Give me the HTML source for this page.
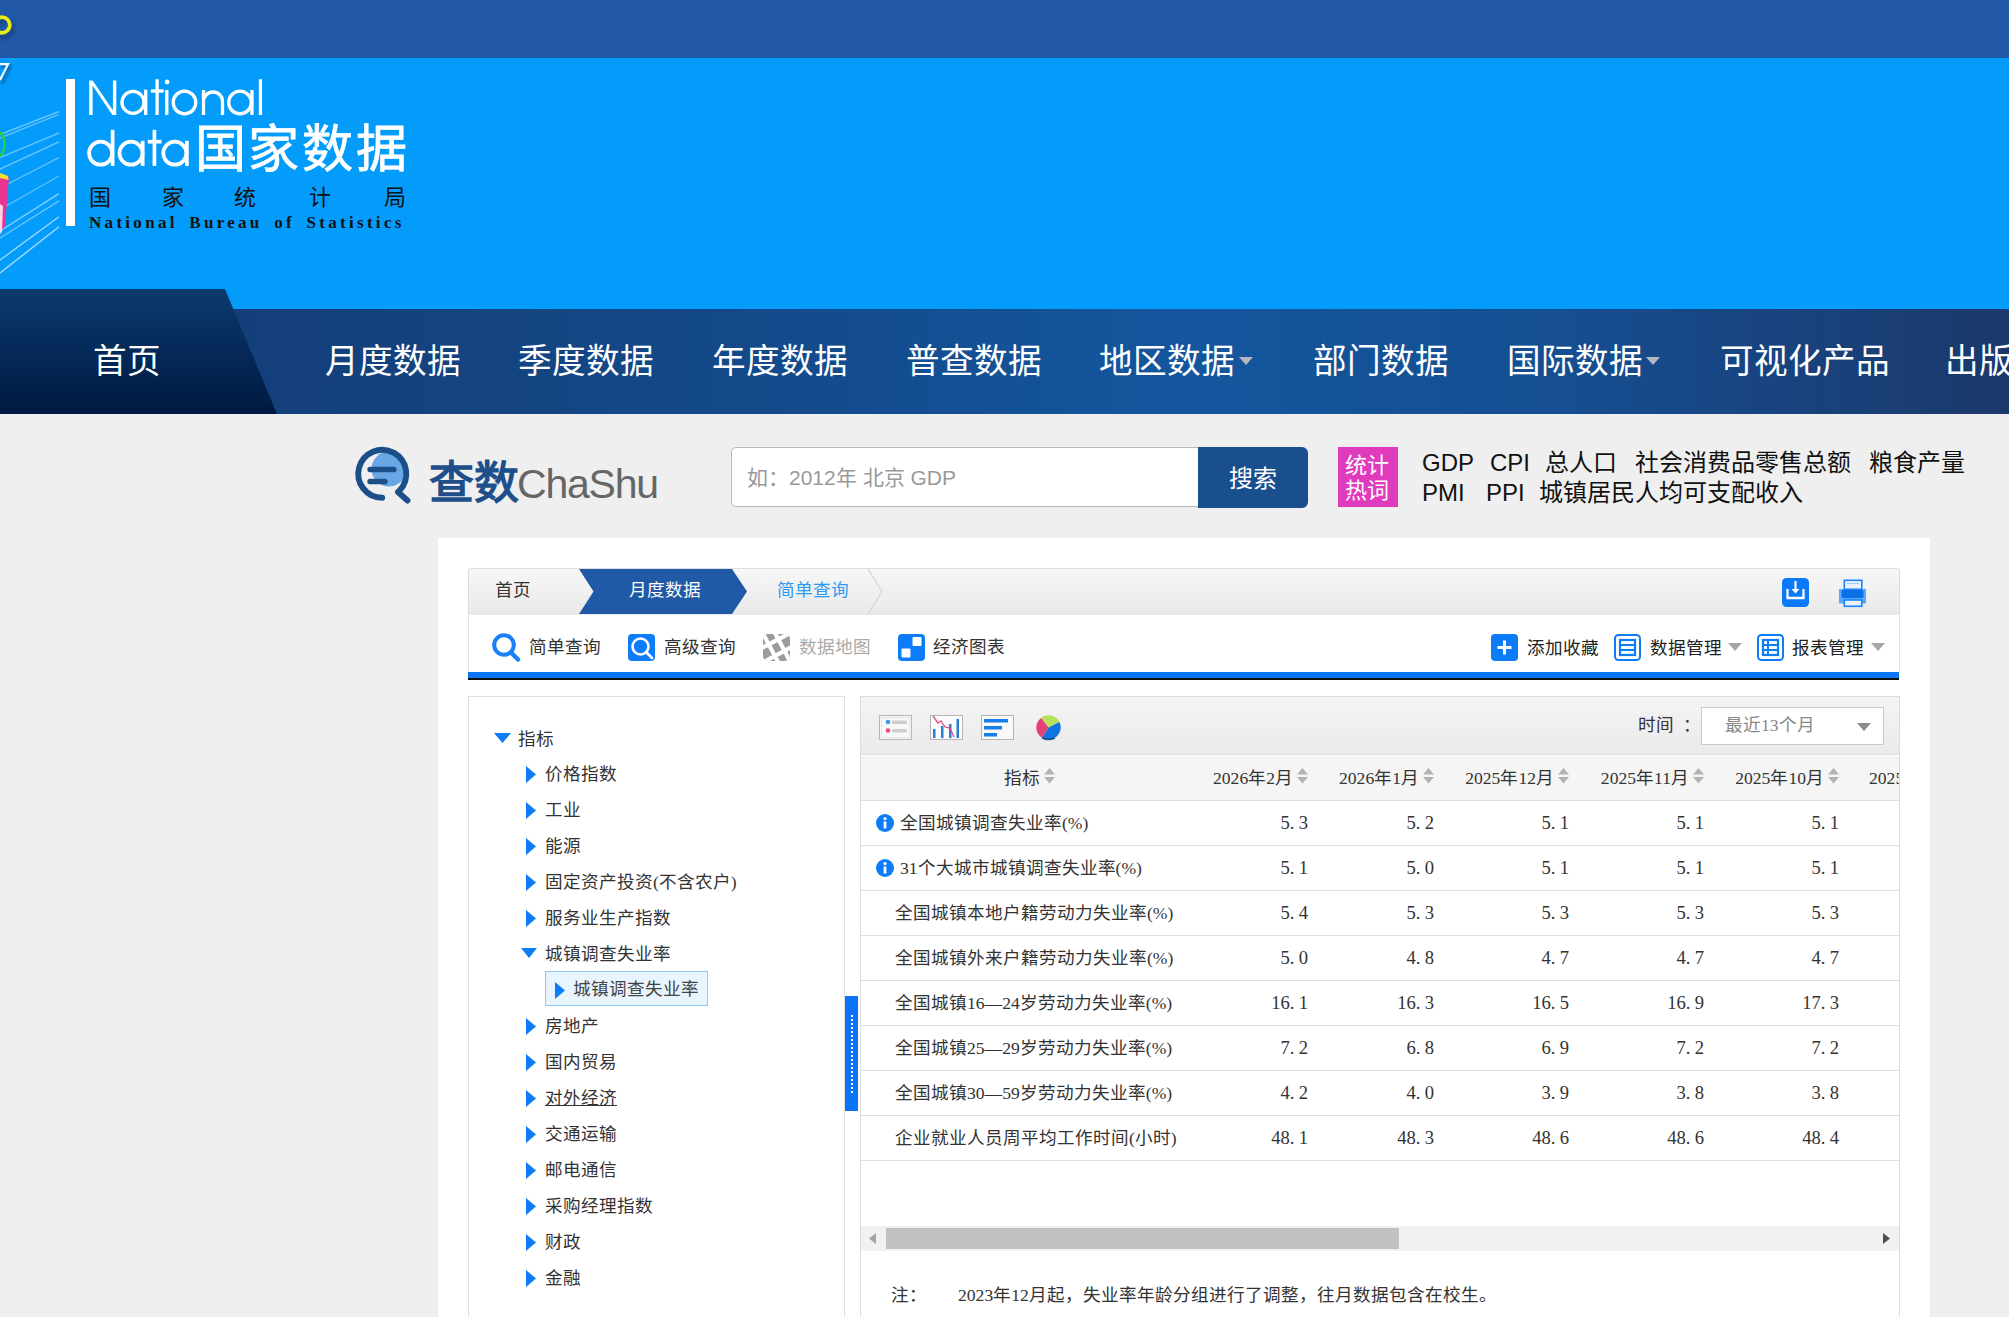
<!DOCTYPE html>
<html lang="zh-CN">
<head>
<meta charset="utf-8">
<style>
*{margin:0;padding:0;box-sizing:border-box}
html,body{width:2009px;height:1317px;overflow:hidden;background:#efefef;font-family:"Liberation Sans",sans-serif}
.a{position:absolute;white-space:nowrap}
.sf{font-family:"Liberation Serif",serif}
#top{left:0;top:0;width:2009px;height:58px;background:#2159a7}
#hdr{left:0;top:58px;width:2009px;height:251px;background:#039cfb}
#nav{left:0;top:309px;width:2009px;height:105px;background:linear-gradient(90deg,#123c74 0%,#14427e 20%,#134b8c 40%,#14569e 59%,#154e91 78%,#1b386b 100%)}
.nv{color:#fff;font-size:33.6px;line-height:40px;top:342px;margin-left:-2px}
.dd{position:absolute;width:0;height:0;border-left:7px solid transparent;border-right:7px solid transparent;border-top:8px solid #b4b8c0}
.hw{font-size:24px;line-height:28px;color:#111}
.t18{font-size:17.6px;line-height:20px;margin-left:-1px}
.num{font-size:18.6px}
.num i{font-style:normal;margin-right:4.2px}
</style>
</head>
<body>
<div id="top" class="a"></div>
<svg class="a" style="left:0;top:0" width="30" height="55"><defs><filter id="rb" x="-50%" y="-50%" width="200%" height="200%"><feGaussianBlur stdDeviation="2"/></filter></defs><circle cx="4" cy="29" r="8" fill="none" stroke="#163f7a" stroke-width="4" filter="url(#rb)"/><circle cx="2" cy="25" r="7.8" fill="none" stroke="#e7ee14" stroke-width="3.8"/></svg>
<div id="hdr" class="a"></div>
<!-- left decoration -->
<svg class="a" style="left:0;top:58px" width="62" height="231" viewBox="0 58 62 231">
 <defs><filter id="bl" x="-50%" y="-50%" width="200%" height="200%"><feGaussianBlur stdDeviation="1.5"/></filter></defs>
 <g stroke="#bfe6ff" stroke-width="1.4">
  <line x1="0" y1="134.6" x2="59" y2="111.5" stroke-opacity="0.55"/>
  <line x1="0" y1="138" x2="59" y2="114.4" stroke-opacity="0.5"/>
  <line x1="0" y1="157.6" x2="59" y2="133" stroke-opacity="0.5"/>
  <line x1="0" y1="169" x2="59" y2="141.8" stroke-opacity="0.55"/>
  <line x1="0" y1="188" x2="59" y2="157.6" stroke-opacity="0.5"/>
  <line x1="0" y1="209.5" x2="59" y2="176" stroke-opacity="0.5"/>
  <line x1="0" y1="231" x2="59" y2="193.7" stroke-opacity="0.7"/>
  <line x1="0" y1="238" x2="59" y2="200.9" stroke-opacity="0.55"/>
  <line x1="0" y1="260" x2="59" y2="216.7" stroke-opacity="0.8"/>
  <line x1="0" y1="273" x2="59" y2="226.8" stroke-opacity="0.85"/>
 </g>
 <path d="M1 66.5 H10 L2 84" fill="none" stroke="#0b64b5" stroke-width="3" filter="url(#bl)"/>
 <path d="M0 64.2 H8 L0 80" fill="none" stroke="#f2f9ff" stroke-width="2.2"/>
 <path d="M-3 132 A6 11 0 0 1 -1 156" fill="none" stroke="#22d43a" stroke-width="2.6"/>
 <path d="M0 174 L9 177 L5 226 L0 232Z" fill="#e9358f"/>
 <path d="M0 173 L8 176 L8.5 180 L0 178Z" fill="#f3df2a"/>
 <path d="M0 204 L3 206 L2 232 L0 234Z" fill="#ffd3ea"/>
</svg>
<!-- logo -->
<div class="a" style="left:66px;top:79px;width:9px;height:147px;background:#fff"></div>
<svg class="a" style="left:80px;top:72px" width="200" height="100" viewBox="80 72 200 100">
 <g fill="none" stroke="#fff" stroke-width="3.3">
  
  <circle cx="133" cy="102.4" r="11"/><line x1="145.7" y1="89.7" x2="145.7" y2="115"/>
  <line x1="157.1" y1="79.2" x2="157.1" y2="115"/><line x1="150.9" y1="91" x2="163.7" y2="91"/>
  <line x1="166.8" y1="90" x2="166.8" y2="115"/>
  <circle cx="184.5" cy="102.5" r="11.3"/>
  <path d="M203.5 115 V90 M203.5 101.5 A9.5 9.5 0 0 1 222.5 101.5 V115"/>
  <circle cx="240" cy="102.5" r="11.3"/><line x1="252" y1="90" x2="252" y2="115"/>
  <line x1="260.4" y1="79.2" x2="260.4" y2="115"/>
 </g>
 <circle cx="167.1" cy="82" r="2.4" fill="#fff"/>
 <path d="M89.2 80.5 H92.6 V80.6 L112.9 110.2 V80.5 H116.3 V115 H112.4 L92.6 85.6 V115 H89.2Z" fill="#fff"/>
 <g fill="none" stroke="#fff" stroke-width="3.7">
  <circle cx="100.6" cy="153.2" r="11.5"/><line x1="112.6" y1="129.8" x2="112.6" y2="165.9"/>
  <circle cx="131" cy="153.2" r="11.5"/><line x1="142.7" y1="140.8" x2="142.7" y2="165.9"/>
  <line x1="154.4" y1="129.8" x2="154.4" y2="165.9"/><line x1="147.8" y1="141.7" x2="161.5" y2="141.7"/>
  <circle cx="174.8" cy="153.2" r="11.5"/><line x1="186.9" y1="140.8" x2="186.9" y2="165.9"/>
 </g>
</svg>
<div class="a" id="lg3" style="left:194.5px;top:120px;font-size:51px;line-height:60px;color:#fff;letter-spacing:2.9px;-webkit-text-stroke:0.8px #fff">国家数据</div>
<div class="a" id="lg4" style="left:89px;top:185px;font-size:22px;line-height:26px;color:#111"><span class="a" style="left:0">国</span><span class="a" style="left:73px">家</span><span class="a" style="left:145px">统</span><span class="a" style="left:220px">计</span><span class="a" style="left:295px">局</span></div>
<div class="a sf" id="lg5" style="left:89px;top:213px;font-size:17px;line-height:20px;color:#111;font-weight:bold;letter-spacing:3.3px;word-spacing:4px">National Bureau of Statistics</div>

<!-- nav -->
<div id="nav" class="a"></div>
<svg class="a" style="left:0;top:289px" width="280" height="125">
 <defs><linearGradient id="tg" x1="0" y1="0" x2="0" y2="1"><stop offset="0" stop-color="#0b3b70"/><stop offset="1" stop-color="#001840"/></linearGradient></defs>
 <path d="M0 0 H225 L277 125 H0Z" fill="url(#tg)"/>
</svg>
<div class="a nv" style="left:95px">首页</div>
<div class="a nv" style="left:327px">月度数据</div>
<div class="a nv" style="left:520px">季度数据</div>
<div class="a nv" style="left:714px">年度数据</div>
<div class="a nv" style="left:908px">普查数据</div>
<div class="a nv" style="left:1101px">地区数据</div>
<div class="dd" style="left:1239px;top:357px"></div>
<div class="a nv" style="left:1315px">部门数据</div>
<div class="a nv" style="left:1509px">国际数据</div>
<div class="dd" style="left:1646px;top:357px"></div>
<div class="a nv" style="left:1722px">可视化产品</div>
<div class="a nv" style="left:1947px">出版物</div>

<!-- search -->
<svg class="a" style="left:345px;top:440px" width="75" height="70" viewBox="345 440 75 70">
 <defs><clipPath id="ci"><circle cx="382" cy="473.8" r="22"/></clipPath></defs>
 <circle cx="389" cy="469" r="17.5" fill="#69a6e6" clip-path="url(#ci)"/>
 <path d="M382.2 497.8 A24 24 0 1 1 399.5 490.5" fill="none" stroke="#1c4f88" stroke-width="5.9" stroke-linecap="round"/>
 <line x1="398" y1="492" x2="407.5" y2="500.5" stroke="#1c4f88" stroke-width="5.9" stroke-linecap="round"/>
 <line x1="370" y1="469.5" x2="394" y2="469.5" stroke="#1c4f88" stroke-width="5.3" stroke-linecap="round"/>
 <line x1="370" y1="481.5" x2="385" y2="481.5" stroke="#1c4f88" stroke-width="5.3" stroke-linecap="round"/>
</svg>
<div class="a" id="cs1" style="left:429px;top:457px;font-size:45px;line-height:54px;color:#1e4f8a;font-weight:bold">查数</div>
<div class="a" id="cs2" style="left:517px;top:459px;font-size:41px;line-height:50px;color:#666;letter-spacing:-1.2px">ChaShu</div>
<div class="a" style="left:731px;top:447px;width:469px;height:60px;background:#fff;border:1px solid #b9b9b9;border-radius:5px 0 0 5px"></div>
<div class="a" id="ph" style="left:747px;top:466px;font-size:21px;line-height:24px;color:#999">如：2012年 北京 GDP</div>
<div class="a" style="left:1198px;top:447px;width:110px;height:61px;background:#1a4f8f;border-radius:0 6px 6px 0"></div>
<div class="a" id="ss" style="left:1229px;top:465px;font-size:24px;line-height:28px;color:#fff">搜索</div>
<div class="a" style="left:1338px;top:447px;width:60px;height:60px;background:#e03bbd"></div>
<div class="a" style="left:1345px;top:453px;font-size:22px;line-height:25px;color:#fff;white-space:normal;width:50px">统计热词</div>
<div class="a hw" style="left:1422px;top:449px">GDP</div>
<div class="a hw" style="left:1490px;top:449px">CPI</div>
<div class="a hw" style="left:1545px;top:449px">总人口</div>
<div class="a hw" style="left:1635px;top:449px">社会消费品零售总额</div>
<div class="a hw" style="left:1869px;top:449px">粮食产量</div>
<div class="a hw" style="left:1422px;top:479px">PMI</div>
<div class="a hw" style="left:1486px;top:479px">PPI</div>
<div class="a hw" style="left:1539px;top:479px">城镇居民人均可支配收入</div>

<!-- MAIN -->
<div class="a" style="left:438px;top:538px;width:1492px;height:779px;background:#fff"></div>

<!-- breadcrumb -->
<div class="a" style="left:468px;top:568px;width:1432px;height:47px;border:1px solid #dedede;border-bottom:none;border-radius:3px 3px 0 0;background:linear-gradient(#f7f7f7,#e9e9e9)"></div>
<svg class="a" style="left:578px;top:569px" width="310" height="46">
 <path d="M1 0 H154 L169 22.5 L154 45 H1 L15.5 22.5Z" fill="#2059a5"/>
 <path d="M290 0 L304 22.5 L290 45" fill="none" stroke="#d4d4d4" stroke-width="1.2"/>
</svg>
<div class="a sf t18" style="left:496px;top:580px;color:#333">首页</div>
<div class="a sf t18" style="left:630px;top:580px;color:#fff">月度数据</div>
<div class="a sf t18" style="left:778px;top:580px;color:#2d9af0">简单查询</div>
<!-- download / print -->
<svg class="a" style="left:1775px;top:572px" width="100" height="40" viewBox="1775 572 100 40">
 <rect x="1782" y="578" width="27" height="29" rx="4.5" fill="#0a7afa"/>
 <path d="M1787.5 589 V598 H1803.5 V589" fill="none" stroke="#fff" stroke-width="2.3"/>
 <line x1="1795.5" y1="581" x2="1795.5" y2="590" stroke="#fff" stroke-width="2.2"/>
 <path d="M1791.5 589 L1795.5 593.5 L1799.5 589Z" fill="#fff"/>
 <rect x="1839" y="589" width="27" height="14.5" fill="#5aa6fb"/>
 <rect x="1841.5" y="590" width="22" height="8" rx="2" fill="#0b6fe6"/>
 <rect x="1844.3" y="580.3" width="17.5" height="9" fill="#e8f3ff" stroke="#1a82fa" stroke-width="1.6"/>
 <rect x="1844.3" y="600" width="17.5" height="6.3" fill="#e8f3ff" stroke="#1a82fa" stroke-width="1.6"/>
 <line x1="1847" y1="583.5" x2="1859" y2="583.5" stroke="#9ccaff" stroke-width="1"/>
</svg>
<!-- toolbar -->
<div class="a" style="left:468px;top:615px;width:1432px;height:57px;background:#fff;border-left:1px solid #e3e3e3;border-right:1px solid #e3e3e3"></div>
<div class="a" style="left:468px;top:672px;width:1431px;height:6px;background:#0a78f6"></div>
<div class="a" style="left:468px;top:678px;width:1431px;height:2px;background:#0b0b0b"></div>
<svg class="a" style="left:490px;top:631px" width="34" height="34" viewBox="0 0 34 34">
 <circle cx="14" cy="14" r="9.8" fill="none" stroke="#1a80f5" stroke-width="4"/>
 <line x1="21" y1="21.5" x2="28" y2="28.5" stroke="#1a80f5" stroke-width="4.5" stroke-linecap="round"/>
</svg>
<div class="a sf t18" style="left:530px;top:637px;color:#333">简单查询</div>
<svg class="a" style="left:628px;top:634px" width="28" height="28" viewBox="0 0 28 28">
 <rect x="0" y="0" width="27" height="27" rx="4" fill="#0d7cf7"/>
 <circle cx="12.5" cy="12.5" r="8" fill="none" stroke="#fff" stroke-width="2.6"/>
 <line x1="18.5" y1="18.5" x2="24" y2="24" stroke="#fff" stroke-width="2.8" stroke-linecap="round"/>
</svg>
<div class="a sf t18" style="left:665px;top:637px;color:#333">高级查询</div>
<svg class="a" style="left:763px;top:634px" width="28" height="28" viewBox="0 0 28 28">
 <defs><clipPath id="rc"><rect x="0" y="0" width="27" height="27" rx="5"/></clipPath></defs>
 <g clip-path="url(#rc)">
 <rect x="0" y="0" width="27" height="27" fill="#9c9c9c"/>
 <g transform="translate(13.5 13.5) rotate(-28)" fill="#fff">
  <rect x="-20" y="-8.5" width="40" height="4.2"/>
  <rect x="-20" y="4.6" width="40" height="4.2"/>
  <rect x="-7.5" y="-20" width="4.2" height="40"/>
  <rect x="3.4" y="-20" width="4.2" height="40"/>
 </g>
 </g>
</svg>
<div class="a sf t18" style="left:800px;top:637px;color:#aaa">数据地图</div>
<svg class="a" style="left:898px;top:634px" width="28" height="28" viewBox="0 0 28 28">
 <rect x="0" y="0" width="27" height="27" rx="4" fill="#0d7cf7"/>
 <rect x="14.5" y="3" width="9" height="9" rx="1" fill="#fff"/>
 <rect x="3.5" y="14.5" width="9" height="9" rx="1" fill="#fff"/>
</svg>
<div class="a sf t18" style="left:934px;top:637px;color:#333">经济图表</div>
<svg class="a" style="left:1491px;top:634px" width="28" height="28" viewBox="0 0 28 28">
 <rect x="0" y="0" width="27" height="27" rx="4" fill="#0d7cf7"/>
 <line x1="13.5" y1="6.5" x2="13.5" y2="20.5" stroke="#fff" stroke-width="3"/>
 <line x1="6.5" y1="13.5" x2="20.5" y2="13.5" stroke="#fff" stroke-width="3"/>
</svg>
<div class="a t18" style="left:1528px;top:638px;color:#222">添加收藏</div>
<svg class="a" style="left:1614px;top:634px" width="28" height="28" viewBox="0 0 28 28">
 <rect x="1" y="1" width="25" height="25" rx="3.5" fill="#fff" stroke="#0d7cf7" stroke-width="2"/>
 <rect x="6" y="6" width="15" height="15" fill="none" stroke="#0d7cf7" stroke-width="2.2"/>
 <line x1="7" y1="11" x2="20" y2="11" stroke="#0d7cf7" stroke-width="2"/>
 <line x1="7" y1="16" x2="20" y2="16" stroke="#0d7cf7" stroke-width="2"/>
</svg>
<div class="a t18" style="left:1651px;top:638px;color:#222">数据管理</div>
<div class="dd" style="left:1728px;top:643px;border-top-color:#a6a6a6"></div>
<svg class="a" style="left:1757px;top:634px" width="28" height="28" viewBox="0 0 28 28">
 <rect x="1" y="1" width="25" height="25" rx="3.5" fill="#fff" stroke="#0d7cf7" stroke-width="2"/>
 <rect x="6" y="6" width="15" height="15" fill="none" stroke="#0d7cf7" stroke-width="2.2"/>
 <line x1="7" y1="11" x2="20" y2="11" stroke="#0d7cf7" stroke-width="2"/>
 <line x1="7" y1="16" x2="20" y2="16" stroke="#0d7cf7" stroke-width="2"/>
 <line x1="11" y1="7" x2="11" y2="20" stroke="#0d7cf7" stroke-width="2"/>
</svg>
<div class="a t18" style="left:1793px;top:638px;color:#222">报表管理</div>
<div class="dd" style="left:1871px;top:643px;border-top-color:#a6a6a6"></div>

<!-- tree panel -->
<div class="a" style="left:468px;top:696px;width:377px;height:640px;border:1px solid #dedede;background:#fff"></div>
<div class="a" style="left:845px;top:996px;width:13px;height:115px;background:#0a74f9"></div>
<div class="a" style="left:851px;top:1015px;width:0;height:78px;border-left:2px dotted #fff"></div>
<svg class="a" style="left:494px;top:733px" width="17" height="10"><path d="M0 0 H17 L8.5 10Z" fill="#0d7cf7"/></svg>
<div class="a sf t18" style="left:519px;top:729px;color:#333">指标</div>
<svg class="a" style="left:526px;top:766px" width="11" height="18"><path d="M0 0 L10 8.5 L0 17Z" fill="#0d7cf7"/></svg>
<div class="a sf t18" style="left:546px;top:764px;color:#333">价格指数</div>
<svg class="a" style="left:526px;top:802px" width="11" height="18"><path d="M0 0 L10 8.5 L0 17Z" fill="#0d7cf7"/></svg>
<div class="a sf t18" style="left:546px;top:800px;color:#333">工业</div>
<svg class="a" style="left:526px;top:838px" width="11" height="18"><path d="M0 0 L10 8.5 L0 17Z" fill="#0d7cf7"/></svg>
<div class="a sf t18" style="left:546px;top:836px;color:#333">能源</div>
<svg class="a" style="left:526px;top:874px" width="11" height="18"><path d="M0 0 L10 8.5 L0 17Z" fill="#0d7cf7"/></svg>
<div class="a sf t18" style="left:546px;top:872px;color:#333">固定资产投资(不含农户)</div>
<svg class="a" style="left:526px;top:910px" width="11" height="18"><path d="M0 0 L10 8.5 L0 17Z" fill="#0d7cf7"/></svg>
<div class="a sf t18" style="left:546px;top:908px;color:#333">服务业生产指数</div>
<svg class="a" style="left:521px;top:948px" width="16" height="10"><path d="M0 0 H16 L8.0 10Z" fill="#0d7cf7"/></svg>
<div class="a sf t18" style="left:546px;top:944px;color:#333">城镇调查失业率</div>
<div class="a" style="left:545px;top:971px;width:163px;height:35px;background:#e9f5fe;border:1px solid #8dcaf3"></div>
<svg class="a" style="left:555px;top:982px" width="11" height="18"><path d="M0 0 L10 8.5 L0 17Z" fill="#0d7cf7"/></svg>
<div class="a sf t18" style="left:574px;top:979px;color:#444">城镇调查失业率</div>
<svg class="a" style="left:526px;top:1018px" width="11" height="18"><path d="M0 0 L10 8.5 L0 17Z" fill="#0d7cf7"/></svg>
<div class="a sf t18" style="left:546px;top:1016px;color:#333">房地产</div>
<svg class="a" style="left:526px;top:1054px" width="11" height="18"><path d="M0 0 L10 8.5 L0 17Z" fill="#0d7cf7"/></svg>
<div class="a sf t18" style="left:546px;top:1052px;color:#333">国内贸易</div>
<svg class="a" style="left:526px;top:1090px" width="11" height="18"><path d="M0 0 L10 8.5 L0 17Z" fill="#0d7cf7"/></svg>
<div class="a sf t18" style="left:546px;top:1088px;color:#333;text-decoration:underline">对外经济</div>
<svg class="a" style="left:526px;top:1126px" width="11" height="18"><path d="M0 0 L10 8.5 L0 17Z" fill="#0d7cf7"/></svg>
<div class="a sf t18" style="left:546px;top:1124px;color:#333">交通运输</div>
<svg class="a" style="left:526px;top:1162px" width="11" height="18"><path d="M0 0 L10 8.5 L0 17Z" fill="#0d7cf7"/></svg>
<div class="a sf t18" style="left:546px;top:1160px;color:#333">邮电通信</div>
<svg class="a" style="left:526px;top:1198px" width="11" height="18"><path d="M0 0 L10 8.5 L0 17Z" fill="#0d7cf7"/></svg>
<div class="a sf t18" style="left:546px;top:1196px;color:#333">采购经理指数</div>
<svg class="a" style="left:526px;top:1234px" width="11" height="18"><path d="M0 0 L10 8.5 L0 17Z" fill="#0d7cf7"/></svg>
<div class="a sf t18" style="left:546px;top:1232px;color:#333">财政</div>
<svg class="a" style="left:526px;top:1270px" width="11" height="18"><path d="M0 0 L10 8.5 L0 17Z" fill="#0d7cf7"/></svg>
<div class="a sf t18" style="left:546px;top:1268px;color:#333">金融</div>
<!-- table panel -->
<div class="a" style="left:860px;top:696px;width:1040px;height:640px;border:1px solid #dedede;background:#fff"></div>
<div class="a" style="left:861px;top:697px;width:1038px;height:58px;background:linear-gradient(#f4f4f4,#eaeaea);border-bottom:1px solid #e0e0e0"></div>
<div class="a" style="left:861px;top:756px;width:1038px;height:45px;background:#f5f5f5;border-bottom:1px solid #dddddd"></div>

<svg class="a" style="left:879px;top:715px" width="34" height="26" viewBox="0 0 34 26">
 <rect x="0.5" y="0.5" width="32" height="24" fill="#f8f8f8" stroke="#b5b5b5"/>
 <rect x="2.5" y="2.5" width="28" height="20" fill="none" stroke="#e3e3e3"/>
 <circle cx="9" cy="7" r="2.3" fill="#3a9af0"/><rect x="13" y="5.5" width="15" height="3.5" fill="#cfcfcf"/>
 <circle cx="9" cy="15.5" r="2.3" fill="#e84a8a"/><rect x="13" y="14" width="15" height="3.5" fill="#cfcfcf"/>
</svg>
<svg class="a" style="left:930px;top:715px" width="34" height="26" viewBox="0 0 34 26">
 <rect x="0.5" y="0.5" width="32" height="24" fill="#fbfbfb" stroke="#b5b5b5"/>
 <rect x="3" y="14" width="2.5" height="9" fill="#2a7fd4"/><rect x="11" y="11" width="2.5" height="12" fill="#2a7fd4"/><rect x="19" y="9" width="2.5" height="14" fill="#2a7fd4"/><rect x="26.5" y="4" width="2.5" height="19" fill="#2a7fd4"/>
 <path d="M3 1 L8 8 L11 6 L15 12 L20 13 L24 22" fill="none" stroke="#e0508a" stroke-width="1.3"/>
</svg>
<svg class="a" style="left:981px;top:715px" width="34" height="26" viewBox="0 0 34 26">
 <rect x="0.5" y="0.5" width="32" height="24" fill="#f8f8f8" stroke="#b5b5b5"/>
 <rect x="3" y="4" width="24" height="3.5" fill="#1a7ee8"/><rect x="3" y="11" width="18" height="3.5" fill="#1a7ee8"/><rect x="3" y="18" width="13" height="3.5" fill="#1a7ee8"/>
</svg>
<svg class="a" style="left:1036px;top:715px" width="26" height="26" viewBox="0 0 26 26">
 <path d="M12.5 12.5 L4.99 2.89 A12.2 12.2 0 0 1 23.37 6.96Z" fill="#b5e25a"/>
 <path d="M12.5 12.5 L23.37 6.96 A12.2 12.2 0 0 1 5.86 22.73Z" fill="#0f74e0"/>
 <path d="M12.5 12.5 L5.86 22.73 A12.2 12.2 0 0 1 4.99 2.89Z" fill="#e63f78"/>
 <path d="M6 23 Q12.5 26 19 23" fill="none" stroke="#103c70" stroke-width="1.5" opacity="0.8"/>
</svg>
<div class="a sf t18" style="left:1639px;top:715px;color:#333">时间&nbsp;&nbsp;：</div>
<div class="a" style="left:1701px;top:707px;width:183px;height:38px;background:#fff;border:1px solid #c9c9c9"></div>
<div class="a sf t18" style="left:1726px;top:715px;color:#888">最近13个月</div>
<div class="dd" style="left:1857px;top:723px;border-top-color:#8a8a8a;border-left-width:7px;border-right-width:7px"></div>

<div class="a sf t18" style="left:1005px;top:768px;color:#333">指标</div>
<svg class="a" style="left:1044px;top:768px" width="12" height="16"><path d="M0 6.5 L5.5 0 L11 6.5Z M0 9 H11 L5.5 15.5Z" fill="#b3b3b3"/></svg>
<div class="a sf t18" style="left:1094px;width:200px;text-align:right;top:768px;color:#333">2026年2月</div>
<svg class="a" style="left:1297px;top:768px" width="12" height="16"><path d="M0 6.5 L5.5 0 L11 6.5Z M0 9 H11 L5.5 15.5Z" fill="#b3b3b3"/></svg>
<div class="a sf t18" style="left:1220px;width:200px;text-align:right;top:768px;color:#333">2026年1月</div>
<svg class="a" style="left:1423px;top:768px" width="12" height="16"><path d="M0 6.5 L5.5 0 L11 6.5Z M0 9 H11 L5.5 15.5Z" fill="#b3b3b3"/></svg>
<div class="a sf t18" style="left:1355px;width:200px;text-align:right;top:768px;color:#333">2025年12月</div>
<svg class="a" style="left:1558px;top:768px" width="12" height="16"><path d="M0 6.5 L5.5 0 L11 6.5Z M0 9 H11 L5.5 15.5Z" fill="#b3b3b3"/></svg>
<div class="a sf t18" style="left:1490px;width:200px;text-align:right;top:768px;color:#333">2025年11月</div>
<svg class="a" style="left:1693px;top:768px" width="12" height="16"><path d="M0 6.5 L5.5 0 L11 6.5Z M0 9 H11 L5.5 15.5Z" fill="#b3b3b3"/></svg>
<div class="a sf t18" style="left:1625px;width:200px;text-align:right;top:768px;color:#333">2025年10月</div>
<svg class="a" style="left:1828px;top:768px" width="12" height="16"><path d="M0 6.5 L5.5 0 L11 6.5Z M0 9 H11 L5.5 15.5Z" fill="#b3b3b3"/></svg>
<div class="a" style="left:1861px;top:760px;width:38px;height:36px;overflow:hidden"><div class="a sf t18" style="left:9px;top:8px;color:#333">2025年9月</div></div>
<div class="a" style="left:861px;top:845px;width:1038px;height:1px;background:#e0e0e0"></div>
<svg class="a" style="left:876px;top:814px" width="18" height="18"><circle cx="9" cy="9" r="9" fill="#0d7cf7"/><rect x="7.6" y="7.5" width="2.8" height="7" fill="#fff"/><circle cx="9" cy="4.6" r="1.6" fill="#fff"/></svg>
<div class="a sf t18" style="left:901px;top:813px;color:#333">全国城镇调查失业率(%)</div>
<div class="a sf t18 num" style="left:1109px;width:200px;text-align:right;top:813px;color:#333">5<i>.</i>3</div>
<div class="a sf t18 num" style="left:1235px;width:200px;text-align:right;top:813px;color:#333">5<i>.</i>2</div>
<div class="a sf t18 num" style="left:1370px;width:200px;text-align:right;top:813px;color:#333">5<i>.</i>1</div>
<div class="a sf t18 num" style="left:1505px;width:200px;text-align:right;top:813px;color:#333">5<i>.</i>1</div>
<div class="a sf t18 num" style="left:1640px;width:200px;text-align:right;top:813px;color:#333">5<i>.</i>1</div>
<div class="a" style="left:861px;top:890px;width:1038px;height:1px;background:#e0e0e0"></div>
<svg class="a" style="left:876px;top:859px" width="18" height="18"><circle cx="9" cy="9" r="9" fill="#0d7cf7"/><rect x="7.6" y="7.5" width="2.8" height="7" fill="#fff"/><circle cx="9" cy="4.6" r="1.6" fill="#fff"/></svg>
<div class="a sf t18" style="left:901px;top:858px;color:#333">31个大城市城镇调查失业率(%)</div>
<div class="a sf t18 num" style="left:1109px;width:200px;text-align:right;top:858px;color:#333">5<i>.</i>1</div>
<div class="a sf t18 num" style="left:1235px;width:200px;text-align:right;top:858px;color:#333">5<i>.</i>0</div>
<div class="a sf t18 num" style="left:1370px;width:200px;text-align:right;top:858px;color:#333">5<i>.</i>1</div>
<div class="a sf t18 num" style="left:1505px;width:200px;text-align:right;top:858px;color:#333">5<i>.</i>1</div>
<div class="a sf t18 num" style="left:1640px;width:200px;text-align:right;top:858px;color:#333">5<i>.</i>1</div>
<div class="a" style="left:861px;top:935px;width:1038px;height:1px;background:#e0e0e0"></div>
<div class="a sf t18" style="left:896px;top:903px;color:#333">全国城镇本地户籍劳动力失业率(%)</div>
<div class="a sf t18 num" style="left:1109px;width:200px;text-align:right;top:903px;color:#333">5<i>.</i>4</div>
<div class="a sf t18 num" style="left:1235px;width:200px;text-align:right;top:903px;color:#333">5<i>.</i>3</div>
<div class="a sf t18 num" style="left:1370px;width:200px;text-align:right;top:903px;color:#333">5<i>.</i>3</div>
<div class="a sf t18 num" style="left:1505px;width:200px;text-align:right;top:903px;color:#333">5<i>.</i>3</div>
<div class="a sf t18 num" style="left:1640px;width:200px;text-align:right;top:903px;color:#333">5<i>.</i>3</div>
<div class="a" style="left:861px;top:980px;width:1038px;height:1px;background:#e0e0e0"></div>
<div class="a sf t18" style="left:896px;top:948px;color:#333">全国城镇外来户籍劳动力失业率(%)</div>
<div class="a sf t18 num" style="left:1109px;width:200px;text-align:right;top:948px;color:#333">5<i>.</i>0</div>
<div class="a sf t18 num" style="left:1235px;width:200px;text-align:right;top:948px;color:#333">4<i>.</i>8</div>
<div class="a sf t18 num" style="left:1370px;width:200px;text-align:right;top:948px;color:#333">4<i>.</i>7</div>
<div class="a sf t18 num" style="left:1505px;width:200px;text-align:right;top:948px;color:#333">4<i>.</i>7</div>
<div class="a sf t18 num" style="left:1640px;width:200px;text-align:right;top:948px;color:#333">4<i>.</i>7</div>
<div class="a" style="left:861px;top:1025px;width:1038px;height:1px;background:#e0e0e0"></div>
<div class="a sf t18" style="left:896px;top:993px;color:#333">全国城镇16—24岁劳动力失业率(%)</div>
<div class="a sf t18 num" style="left:1109px;width:200px;text-align:right;top:993px;color:#333">16<i>.</i>1</div>
<div class="a sf t18 num" style="left:1235px;width:200px;text-align:right;top:993px;color:#333">16<i>.</i>3</div>
<div class="a sf t18 num" style="left:1370px;width:200px;text-align:right;top:993px;color:#333">16<i>.</i>5</div>
<div class="a sf t18 num" style="left:1505px;width:200px;text-align:right;top:993px;color:#333">16<i>.</i>9</div>
<div class="a sf t18 num" style="left:1640px;width:200px;text-align:right;top:993px;color:#333">17<i>.</i>3</div>
<div class="a" style="left:861px;top:1070px;width:1038px;height:1px;background:#e0e0e0"></div>
<div class="a sf t18" style="left:896px;top:1038px;color:#333">全国城镇25—29岁劳动力失业率(%)</div>
<div class="a sf t18 num" style="left:1109px;width:200px;text-align:right;top:1038px;color:#333">7<i>.</i>2</div>
<div class="a sf t18 num" style="left:1235px;width:200px;text-align:right;top:1038px;color:#333">6<i>.</i>8</div>
<div class="a sf t18 num" style="left:1370px;width:200px;text-align:right;top:1038px;color:#333">6<i>.</i>9</div>
<div class="a sf t18 num" style="left:1505px;width:200px;text-align:right;top:1038px;color:#333">7<i>.</i>2</div>
<div class="a sf t18 num" style="left:1640px;width:200px;text-align:right;top:1038px;color:#333">7<i>.</i>2</div>
<div class="a" style="left:861px;top:1115px;width:1038px;height:1px;background:#e0e0e0"></div>
<div class="a sf t18" style="left:896px;top:1083px;color:#333">全国城镇30—59岁劳动力失业率(%)</div>
<div class="a sf t18 num" style="left:1109px;width:200px;text-align:right;top:1083px;color:#333">4<i>.</i>2</div>
<div class="a sf t18 num" style="left:1235px;width:200px;text-align:right;top:1083px;color:#333">4<i>.</i>0</div>
<div class="a sf t18 num" style="left:1370px;width:200px;text-align:right;top:1083px;color:#333">3<i>.</i>9</div>
<div class="a sf t18 num" style="left:1505px;width:200px;text-align:right;top:1083px;color:#333">3<i>.</i>8</div>
<div class="a sf t18 num" style="left:1640px;width:200px;text-align:right;top:1083px;color:#333">3<i>.</i>8</div>
<div class="a" style="left:861px;top:1160px;width:1038px;height:1px;background:#e0e0e0"></div>
<div class="a sf t18" style="left:896px;top:1128px;color:#333">企业就业人员周平均工作时间(小时)</div>
<div class="a sf t18 num" style="left:1109px;width:200px;text-align:right;top:1128px;color:#333">48<i>.</i>1</div>
<div class="a sf t18 num" style="left:1235px;width:200px;text-align:right;top:1128px;color:#333">48<i>.</i>3</div>
<div class="a sf t18 num" style="left:1370px;width:200px;text-align:right;top:1128px;color:#333">48<i>.</i>6</div>
<div class="a sf t18 num" style="left:1505px;width:200px;text-align:right;top:1128px;color:#333">48<i>.</i>6</div>
<div class="a sf t18 num" style="left:1640px;width:200px;text-align:right;top:1128px;color:#333">48<i>.</i>4</div>
<div class="a" style="left:861px;top:1226px;width:1038px;height:25px;background:#f1f1f1"></div>
<div class="a" style="left:886px;top:1228px;width:513px;height:21px;background:#c1c1c1"></div>
<svg class="a" style="left:869px;top:1233px" width="8" height="12"><path d="M7 0 V11 L0 5.5Z" fill="#a3a3a3"/></svg>
<svg class="a" style="left:1883px;top:1233px" width="8" height="12"><path d="M0 0 V11 L7 5.5Z" fill="#505050"/></svg>
<div class="a sf t18" style="left:892px;top:1285px;color:#333">注：</div>
<div class="a sf t18" style="left:959px;top:1285px;color:#333">2023年12月起，失业率年龄分组进行了调整，往月数据包含在校生。</div>

</body>
</html>
